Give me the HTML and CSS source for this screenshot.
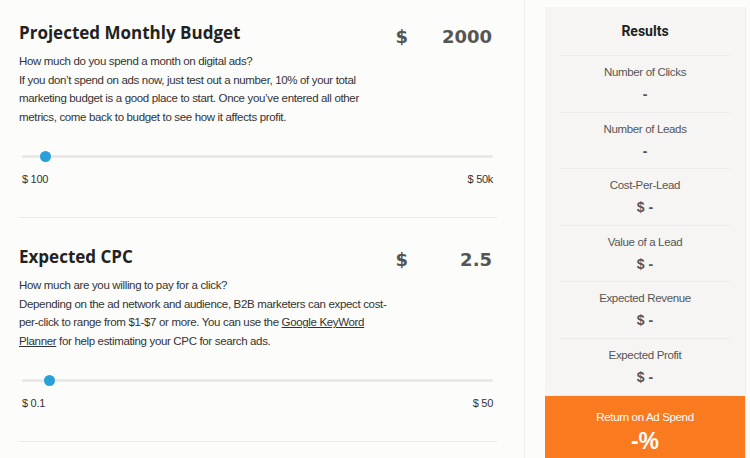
FILE: index.html
```html
<!DOCTYPE html>
<html lang="en">

<head>
    <meta charset="UTF-8">
    <meta name="viewport" content="width=device-width, initial-scale=1.0">
    <title>Ad Spend Calculator</title>
    <link rel="stylesheet" href="styles.css">
</head>

<body>
    <div class="page">
        <div class="calc">
            <section class="field">
                <div class="field-head">
                    <h2>Projected Monthly Budget</h2>
                    <div class="amount"><span class="cur">$</span><span class="num">2000</span></div>
                </div>
                <p class="help">How much do you spend a month on digital ads?<br>If you don’t spend on ads now, just test out a number, 10% of your total<br>marketing budget is a good place to start. Once you’ve entered all other<br>metrics, come back to budget to see how it affects profit.</p>
                <input type="range" class="slider" min="100" max="50000" step="100" value="2000">
                <div class="range-labels"><span>$ 100</span><span>$ 50k</span></div>
            </section>

            <section class="field">
                <div class="field-head">
                    <h2>Expected CPC</h2>
                    <div class="amount"><span class="cur">$</span><span class="num">2.5</span></div>
                </div>
                <p class="help">How much are you willing to pay for a click?<br>Depending on the ad network and audience, B2B marketers can expect cost-<br>per-click to range from $1-$7 or more. You can use the <a href="#">Google KeyWord<br>Planner</a> for help estimating your CPC for search ads.</p>
                <input type="range" class="slider" min="0.1" max="50" step="0.1" value="2.5">
                <div class="range-labels"><span>$ 0.1</span><span>$ 50</span></div>
            </section>
        </div>

        <aside class="results">
            <h3>Results</h3>
            <div class="result">
                <div class="result-label">Number of Clicks</div>
                <div class="result-value">-</div>
            </div>
            <div class="result">
                <div class="result-label">Number of Leads</div>
                <div class="result-value">-</div>
            </div>
            <div class="result">
                <div class="result-label">Cost-Per-Lead</div>
                <div class="result-value">$ -</div>
            </div>
            <div class="result">
                <div class="result-label">Value of a Lead</div>
                <div class="result-value">$ -</div>
            </div>
            <div class="result">
                <div class="result-label">Expected Revenue</div>
                <div class="result-value">$ -</div>
            </div>
            <div class="result">
                <div class="result-label">Expected Profit</div>
                <div class="result-value">$ -</div>
            </div>
            <div class="roas">
                <div class="roas-label">Return on Ad Spend</div>
                <div class="roas-value">-%</div>
            </div>
        </aside>
    </div>
</body>
</html>
```

FILE: styles.css
```css
:root {
    --page-bg: #fcfcfb;
    --panel-bg: #f6f5f3;
    --line-color: #ebebea;
    --text-color: #333;
    --muted-color: #555;
    --accent-color: #2a9fd8;
    --orange-color: #f97a1f;
}

* {
    box-sizing: border-box;
    margin: 0;
    padding: 0;
}

body {
    font-family: 'Liberation Sans', Arial, sans-serif;
    background-color: var(--page-bg);
    color: var(--text-color);
}

.page {
    display: flex;
    min-height: 100vh;
}

.calc {
    width: 525px;
    padding: 0 27px 0 19px;
    border-right: 1px solid #efefee;
}

.field {
    padding: 27px 0 31px;
    border-bottom: 1px solid var(--line-color);
}

.field:first-child {
    padding-top: 21px;
}

.field-head {
    display: flex;
    justify-content: space-between;
    align-items: center;
    height: 24px;
}

.field-head h2 {
    font-family: 'Open Sans', sans-serif;
    font-size: 17px;
    font-weight: 700;
    line-height: 24px;
    color: #222;
}

.amount {
    display: flex;
    align-items: center;
    padding-top: 6px;
    margin-right: 5px;
    font-family: 'DejaVu Sans', Verdana, sans-serif;
    font-size: 18px;
    font-weight: 700;
    color: #555;
}

.amount .num {
    width: 84px;
    text-align: right;
}

.help {
    margin-top: 7px;
    font-size: 11.5px;
    letter-spacing: -0.34px;
    line-height: 18.7px;
    color: var(--text-color);
}

.help a {
    color: var(--text-color);
}

.slider {
    -webkit-appearance: none;
    appearance: none;
    display: block;
    width: 471px;
    height: 12px;
    margin: 24px 0 0 3px;
    background: transparent;
}

.slider::-webkit-slider-runnable-track {
    height: 3px;
    background-color: #e9e9e8;
    border-radius: 2px;
}

.slider::-webkit-slider-thumb {
    -webkit-appearance: none;
    width: 11px;
    height: 11px;
    margin-top: -4px;
    border-radius: 50%;
    background-color: var(--accent-color);
}

.range-labels {
    display: flex;
    justify-content: space-between;
    margin: 9px 4px 0 3px;
    font-size: 11px;
    line-height: 14px;
    letter-spacing: -0.3px;
    color: var(--text-color);
}

.results {
    align-self: flex-start;
    width: 201px;
    margin: 7px 0 0 20px;
    background-color: var(--panel-bg);
    border-right: 1px solid #f1ede8;
    text-align: center;
}

.results h3 {
    margin: 0 15px;
    padding: 14px 0 14px;
    font-family: Roboto, sans-serif;
    font-size: 14px;
    font-weight: 700;
    line-height: 20px;
    color: #222;
    border-bottom: 1px solid var(--line-color);
}

.result {
    margin: 0 15px;
    padding: 8px 0 8.6px;
    border-bottom: 1px solid var(--line-color);
}

.result:last-of-type {
    border-bottom: none;
}

.result-label {
    font-size: 11.5px;
    letter-spacing: -0.34px;
    line-height: 16px;
    color: var(--muted-color);
}

.result-value {
    margin-top: 5px;
    font-size: 14px;
    font-weight: 700;
    line-height: 18px;
    color: var(--muted-color);
}

.roas {
    padding: 13.5px 0 30px;
    background-color: var(--orange-color);
    color: #fff;
}

.roas-label {
    font-size: 11.5px;
    letter-spacing: -0.34px;
    line-height: 16px;
}

.roas-value {
    margin-top: 2px;
    font-size: 23px;
    font-weight: 700;
    line-height: 28px;
}
```
